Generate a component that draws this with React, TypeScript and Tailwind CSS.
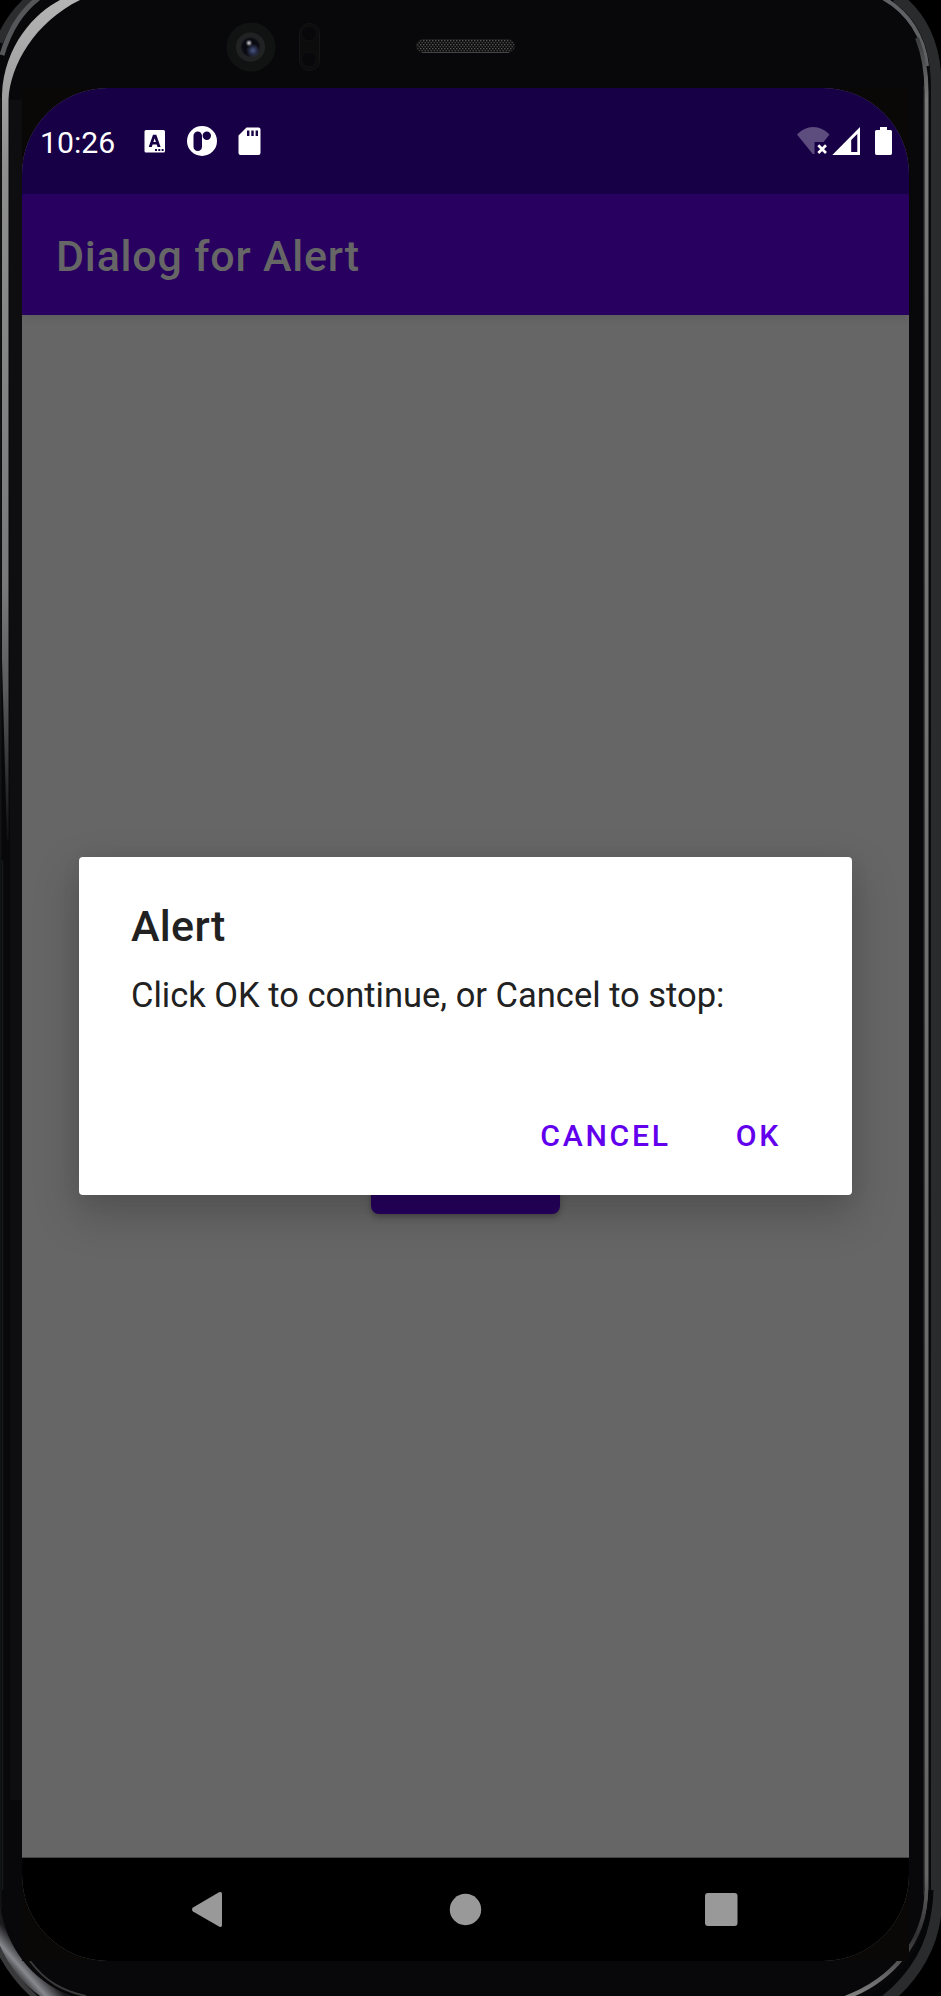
import React from 'react';

function PhoneFrame() {
  return (
    <svg className="absolute inset-0" width="941" height="1996" viewBox="0 0 941 1996" fill="none" aria-hidden="true">
      <defs>
        <linearGradient id="leftShine" gradientUnits="userSpaceOnUse" x1="0" y1="0" x2="0" y2="840">
          <stop offset="0" stopColor="#b4b4b4" />
          <stop offset="0.2" stopColor="#8e8e8e" />
          <stop offset="0.7" stopColor="#777879" />
          <stop offset="0.82" stopColor="#5a5b5c" />
          <stop offset="1" stopColor="#111113" />
        </linearGradient>
        <linearGradient id="cornerShine" gradientUnits="userSpaceOnUse" x1="10" y1="1970" x2="28" y2="1954">
          <stop offset="0" stopColor="#2e2f31" />
          <stop offset="0.4" stopColor="#88898e" />
          <stop offset="1" stopColor="#1b1b1e" />
        </linearGradient>
        <linearGradient id="rightShine" gradientUnits="userSpaceOnUse" x1="0" y1="0" x2="0" y2="1996">
          <stop offset="0" stopColor="#606165" />
          <stop offset="0.02" stopColor="#3a3b3d" />
          <stop offset="0.05" stopColor="#777777" />
          <stop offset="0.94" stopColor="#666666" />
          <stop offset="0.97" stopColor="#303032" />
          <stop offset="1" stopColor="#808080" />
        </linearGradient>
        <radialGradient id="lens">
          <stop offset="0" stopColor="#07080d" />
          <stop offset="0.55" stopColor="#0a0b12" />
          <stop offset="0.7" stopColor="#202123" />
          <stop offset="1" stopColor="#222323" />
        </radialGradient>
        <radialGradient id="glare">
          <stop offset="0" stopColor="#485484" />
          <stop offset="1" stopColor="#485484" stopOpacity="0" />
        </radialGradient>
        <radialGradient id="spark">
          <stop offset="0" stopColor="#dddde0" />
          <stop offset="1" stopColor="#bbbbc0" stopOpacity="0" />
        </radialGradient>
        <pattern id="mesh" width="3" height="4" patternUnits="userSpaceOnUse">
          <rect width="3" height="4" fill="#0c0c0c" />
          <rect width="1.4" height="1.4" fill="#555" />
          <rect x="1.5" y="2" width="1.4" height="1.4" fill="#484848" />
        </pattern>
      </defs>
      <path d="M24 0C14 9 6 20 0 33V1950C9 1968 21 1983 38 1996H890C915 1976 932 1950 941 1920V80C937 48 924 20 902 0Z" fill="#08080a" />
      <path d="M32 -3C17 9 7 23 -1 42" stroke="#2c2d2f" strokeWidth="8" />
      <path d="M40 -3C22 10 10 28 2 55" stroke="#55565a" strokeWidth="5" />
      <path d="M60 0C35 13 4 45 2 95V660L7 840H8.500V100C10 65 35 22 80 0Z" fill="url(#leftShine)" />
      <rect x="0" y="98" width="1.500" height="1812" fill="#111315" />
      <rect x="10" y="100" width="12" height="1700" fill="#0e0d0f" />
      <path d="M2.500 860V1890" stroke="#16181a" strokeWidth="1.500" />
      <path d="M0 1906C6 1945 30 1981 72 1996H40C22 1983 6 1966 0 1946Z" fill="url(#cornerShine)" />
      <path d="M-2 1948C7 1967 20 1984 36 1998" stroke="#39393b" strokeWidth="5" />
      <path d="M30 1961C45 1981 62 1991 86 1996" stroke="#3a3a3b" strokeWidth="2" />
      <path d="M896 -3C920 14 936 43 936 85V1910C934 1943 916 1976 886 2000" stroke="#292b2c" strokeWidth="11" />
      <path d="M884 -2C914 14 930 41 930 90V1900" stroke="#08090a" strokeWidth="2" />
      <path d="M883 -2C908 12 924 36 927 66" stroke="#606165" strokeWidth="4" />
      <path d="M917 38C924 55 926.500 70 926.500 92V1890C926 1942 891 1982 842 1999" stroke="url(#rightShine)" strokeWidth="4" />
      <path d="M931 1890C929 1944 907 1975 872 1997" stroke="#050607" strokeWidth="5" />
      <path d="M923.500 86V1895" stroke="#1c1c1e" strokeWidth="1" />
      <path d="M22 88H909V1961H22Z" fill="#090806" />
      <circle cx="251" cy="47" r="24.500" fill="#111212" />
      <circle cx="250.500" cy="47" r="14.500" fill="url(#lens)" />
      <circle cx="253" cy="50.500" r="7" fill="url(#glare)" />
      <circle cx="249" cy="43" r="3.500" fill="url(#spark)" />
      <rect x="299.500" y="23.500" width="20" height="47" rx="10" fill="#0c0c0d" stroke="#151515" />
      <circle cx="309" cy="33.500" r="7.500" fill="#08080a" stroke="#111" />
      <circle cx="309" cy="59.500" r="7.500" fill="#08080a" stroke="#111" />
      <rect x="416.500" y="39.500" width="98" height="13" rx="6.500" fill="url(#mesh)" stroke="#1b1b1b" />
      <path d="M422 52.500H509" stroke="#444" />
    </svg>
  );
}

function NotificationIcons() {
  return (
    <svg width="117" height="30" viewBox="144 126 117 30" fill="#fff" aria-hidden="true">
      <path fillRule="evenodd" d="M146 130H163.500Q165 130 165 131.500V151Q165 152.500 163.500 152.500H146Q144.500 152.500 144.500 151V131.500Q144.500 130 146 130ZM153 134.800L148.700 147H151.800L152.600 144.600H156.700L157.500 147H160.600L156.300 134.800ZM153.400 142L154.650 138.200L155.900 142ZM155 149V151H157V149ZM158.300 149V151H160.300V149ZM161.600 149V151H163.600V149Z" />
      <circle cx="202" cy="141" r="15" />
      <rect x="193.500" y="131.500" width="8.500" height="19.500" rx="4.250" fill="#180047" />
      <circle cx="206.800" cy="135.700" r="4.200" fill="#180047" />
      <path fillRule="evenodd" d="M246.500 127.500H258.500Q260.500 127.500 260.500 129.500V153Q260.500 155 258.500 155H240.500Q238.500 155 238.500 153V135.500ZM247 130.500V136H249.400V130.500ZM251.300 130.500V136H253.700V130.500ZM255.600 130.500V136H258V130.500Z" />
    </svg>
  );
}

function SystemIcons() {
  return (
    <svg width="96" height="30" viewBox="797 126 96 30" fill="#fff" aria-hidden="true">
      <path d="M797 134.500Q804 127 813.200 127Q822.500 127 829.500 134.500L823.500 142H814.500V154H812.800Z" opacity="0.3" />
      <path d="M818.300 145.300L826 153M826 145.300L818.300 153" stroke="#fff" strokeWidth="2.700" />
      <path fillRule="evenodd" d="M860 127V155H832.300ZM857.300 134L851.200 140V152H857.300Z" />
      <path d="M880 127H887V130H890.500Q892 130 892 131.500V153.300Q892 155 890.500 155H876.500Q875 155 875 153.300V131.500Q875 130 876.500 130H880Z" />
    </svg>
  );
}

function StatusBar() {
  return (
    <div className="flex h-[106px] shrink-0 items-start justify-between bg-[#180047] pt-[38px] pr-[16px] pl-[18px]">
      <div className="flex">
        <span className="mt-[-1px] w-[104px] text-[30.2px] leading-[36px] text-white">10:26</span>
        <NotificationIcons />
      </div>
      <SystemIcons />
    </div>
  );
}

function AlertDialog() {
  return (
    <div
      role="alertdialog"
      className="absolute top-[769px] left-[57px] flex h-[337.5px] w-[773px] flex-col rounded-[4px] bg-white px-[52px] text-[#212121] shadow-[0_18px_44px_4px_rgba(0,0,0,0.18),0_4px_20px_rgba(0,0,0,0.06)]"
    >
      <h2 className="mt-[44px] text-[43px] leading-[50px] font-medium tracking-[0.3px]">Alert</h2>
      <p className="mt-[24px] text-[34.5px] leading-[40px] whitespace-nowrap">Click OK to continue, or Cancel to stop:</p>
      <div className="mt-[103px] mr-[19px] flex justify-end gap-[65px] text-[30.2px] leading-[36px] font-medium tracking-[2.7px] text-[#6200ee]">
        <button type="button">CANCEL</button>
        <button type="button">OK</button>
      </div>
    </div>
  );
}

function NavigationBar() {
  return (
    <nav className="flex h-[103px] shrink-0 items-start bg-black pt-[33px] pl-[169px]">
      <svg width="547" height="38" viewBox="191 1891 547 38" fill="#999" aria-hidden="true">
        <path d="M193 1907.500L219 1892.300Q222 1891 222 1894V1925Q222 1928 219 1926.500L193 1911.500Q191 1909.500 193 1907.500Z" />
        <circle cx="465.500" cy="1909.500" r="15.700" />
        <rect x="705" y="1893" width="32.500" height="33" rx="3" />
      </svg>
    </nav>
  );
}

export default function App() {
  return (
    <div className="relative h-[1996px] w-[941px] overflow-hidden bg-black pt-[88px] pl-[22px] font-['Roboto',sans-serif]">
      <PhoneFrame />
      <main className="relative flex h-[1873px] w-[887px] flex-col overflow-hidden rounded-[86px] bg-[#666]">
        <StatusBar />
        <header className="z-0 flex h-[121px] shrink-0 items-center bg-[#270060] pt-[4px] pl-[34px] text-[43px] font-medium text-[#666] shadow-[0_3px_8px_rgba(0,0,0,0.1)]">
          <h1 className="tracking-[0.8px]">Dialog for Alert</h1>
        </header>
        <section className="flex grow items-end justify-center border-b border-[#444] pb-[643px]">
          <div className="h-[78px] w-[189px] rounded-[8px] bg-[#270060] shadow-[0_3px_6px_rgba(0,0,0,0.3)]" />
        </section>
        <NavigationBar />
        <AlertDialog />
      </main>
    </div>
  );
}
